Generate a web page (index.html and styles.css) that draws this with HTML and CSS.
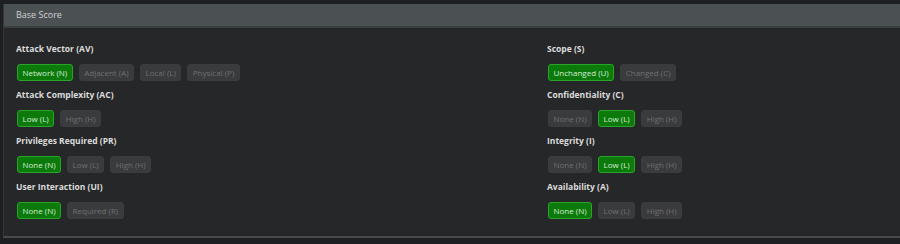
FILE: index.html
```html
<!DOCTYPE html>
<html lang="en">
<head>
    <meta charset="UTF-8">
    <title>Base Score</title>
    <link rel="stylesheet" href="styles.css">
</head>
<body>
    <div class="panel">
        <div class="panel-head">Base Score</div>
        <div class="panel-body">
            <div class="col">
                <div class="metric">
                    <h3>Attack Vector (AV)</h3>
                    <div class="opts">
                        <span class="opt on">Network (N)</span>
                        <span class="opt">Adjacent (A)</span>
                        <span class="opt">Local (L)</span>
                        <span class="opt">Physical (P)</span>
                    </div>
                </div>
                <div class="metric">
                    <h3>Attack Complexity (AC)</h3>
                    <div class="opts">
                        <span class="opt on">Low (L)</span>
                        <span class="opt">High (H)</span>
                    </div>
                </div>
                <div class="metric">
                    <h3>Privileges Required (PR)</h3>
                    <div class="opts">
                        <span class="opt on">None (N)</span>
                        <span class="opt">Low (L)</span>
                        <span class="opt">High (H)</span>
                    </div>
                </div>
                <div class="metric">
                    <h3>User Interaction (UI)</h3>
                    <div class="opts">
                        <span class="opt on">None (N)</span>
                        <span class="opt">Required (R)</span>
                    </div>
                </div>
            </div>
            <div class="col">
                <div class="metric">
                    <h3>Scope (S)</h3>
                    <div class="opts">
                        <span class="opt on">Unchanged (U)</span>
                        <span class="opt">Changed (C)</span>
                    </div>
                </div>
                <div class="metric">
                    <h3>Confidentiality (C)</h3>
                    <div class="opts">
                        <span class="opt">None (N)</span>
                        <span class="opt on">Low (L)</span>
                        <span class="opt">High (H)</span>
                    </div>
                </div>
                <div class="metric">
                    <h3>Integrity (I)</h3>
                    <div class="opts">
                        <span class="opt">None (N)</span>
                        <span class="opt on">Low (L)</span>
                        <span class="opt">High (H)</span>
                    </div>
                </div>
                <div class="metric">
                    <h3>Availability (A)</h3>
                    <div class="opts">
                        <span class="opt on">None (N)</span>
                        <span class="opt">Low (L)</span>
                        <span class="opt">High (H)</span>
                    </div>
                </div>
            </div>
        </div>
    </div>
</body>
</html>
```

FILE: styles.css
```css
body {
    font-family: "Open Sans", "Noto Sans", sans-serif;
    background-color: #1e1f22;
    margin: 0;
    padding: 4px 0 0 3px;
    overflow: hidden;
}
.panel {
    width: 910px;
    background-color: #262728;
    border-left: 1px solid #35373a;
    border-bottom: 2px solid #48494b;
}
.panel-head {
    height: 22px;
    line-height: 22px;
    background-color: #4b5053;
    border-bottom: 2px solid #3a3e41;
    color: #d0d3d4;
    font-size: 9px;
    padding-left: 12px;
}
.panel-body {
    display: grid;
    grid-template-columns: 531px 1fr;
    padding: 12px 0 12px 12px;
}
.metric {
    height: 46px;
}
h3 {
    font-size: 8.5px;
    font-weight: 700;
    color: #dcdcdc;
    margin: 0;
    height: 17px;
    line-height: 17px;
}
.opts {
    display: flex;
    gap: 6px;
    margin-top: 7px;
    padding-left: 1px;
}
.opt {
    font-size: 8px;
    height: 15px;
    line-height: 15px;
    padding: 0 4.5px;
    border: 1px solid #3b3c3e;
    border-radius: 3px;
    background-color: #3a3b3d;
    color: #6e7072;
}
.opt.on {
    background-color: #0b7a0b;
    border-color: #2aa52a;
    color: #d6ecd6;
}
```
